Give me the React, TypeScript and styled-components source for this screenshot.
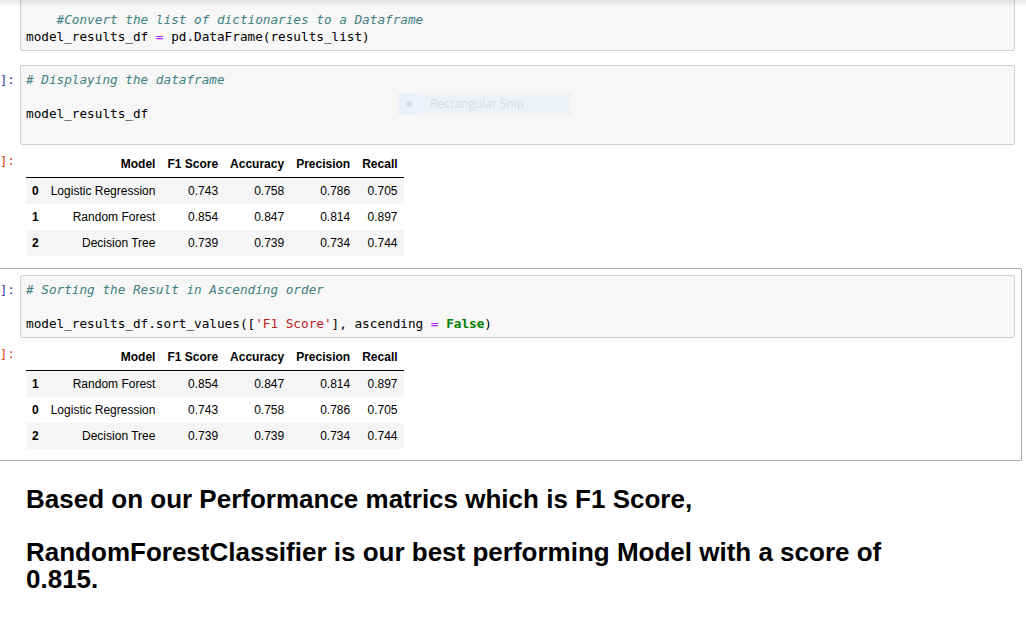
import React from "react";
import styled, { createGlobalStyle } from "styled-components";

const GlobalStyle = createGlobalStyle`
  html, body {
    margin: 0;
    padding: 0;
    background: #ffffff;
    overflow: hidden;
  }
  body {
    width: 1026px;
    height: 624px;
  }
`;

const Page = styled.div`
  position: relative;
  width: 1026px;
  height: 624px;
  overflow: hidden;
  background: #fff;
`;

const HeaderShadow = styled.div`
  position: absolute;
  top: 0;
  left: 0;
  right: 0;
  height: 7px;
  background: linear-gradient(rgba(0, 0, 0, 0.09), rgba(0, 0, 0, 0));
  pointer-events: none;
  z-index: 5;
`;

/* scrolled view: first cell starts above the window and prompts are cut off on the left */
const Notebook = styled.div`
  margin-top: -36px;
  margin-left: -31px;
  width: 1053px;
  display: flex;
  flex-direction: column;
`;

const Cell = styled.div<{ $selected?: boolean }>`
  box-sizing: border-box;
  border: 1px solid ${(p) => (p.$selected ? "#ababab" : "transparent")};
  border-radius: 2px;
  padding: 6px;
  display: flex;
  flex-direction: column;
`;

const Row = styled.div`
  display: flex;
  align-items: flex-start;
`;

const Prompt = styled.div<{ $kind: "in" | "out" }>`
  flex: 0 0 44px;
  box-sizing: border-box;
  padding-right: 5px;
  padding-top: ${(p) => (p.$kind === "in" ? "6px" : "7px")};
  text-align: right;
  font-family: "DejaVu Sans Mono", monospace;
  font-size: 12.7px;
  line-height: 17px;
  color: ${(p) => (p.$kind === "in" ? "#303f9f" : "#d84315")};
  white-space: pre;
`;

const InputBox = styled.div`
  position: relative;
  flex: 1;
  box-sizing: border-box;
  border: 1px solid #cfcfcf;
  border-radius: 2px;
  background: #f7f7f7;
  padding: 5px 5px;
`;

const CodeLine = styled.div`
  height: 17px;
  font-family: "DejaVu Sans Mono", monospace;
  font-size: 12.7px;
  line-height: 17px;
  color: #000;
  white-space: pre;
`;

const Comment = styled.span`
  color: #408080;
  font-style: italic;
`;

const Op = styled.span`
  color: #aa22ff;
`;

const Str = styled.span`
  color: #ba2121;
`;

const Kw = styled.span`
  color: #008000;
  font-weight: bold;
`;

const OutputArea = styled.div`
  flex: 1;
  padding: 6px 6px 5px 6px;
`;

const Table = styled.table`
  border-collapse: collapse;
  border-spacing: 0;
  font-family: "Liberation Sans", Arial, sans-serif;
  font-size: 12px;
  color: #000;

  th,
  td {
    padding: 0 6px;
    height: 26px;
    line-height: 14px;
    text-align: right;
    vertical-align: middle;
    white-space: nowrap;
  }
  th {
    font-weight: bold;
  }
  thead tr {
    border-bottom: 1px solid #000;
  }
  tbody tr:nth-child(odd) {
    background: #f5f5f5;
  }
  tbody th {
    text-align: left;
  }
`;

const SnipGhost = styled.div`
  position: absolute;
  left: 377px;
  top: 27px;
  width: 173px;
  height: 22px;
  display: flex;
  align-items: center;
  background: #eef2f7;
  font-family: "Open Sans", "Noto Sans", sans-serif;
  font-size: 12px;
  line-height: 20px;
  color: #d9dbdf;
`;

const SnipIcon = styled.div`
  width: 22px;
  height: 22px;
  display: flex;
  align-items: center;
  justify-content: center;
  background: #eaf1f9;
  margin-right: 10px;

  &::after {
    content: "";
    width: 6px;
    height: 6px;
    border-radius: 50%;
    background: #dcdee1;
  }
`;

const MarkdownCell = styled.div`
  padding: 25px 6px 0 57px;
  display: flex;
  flex-direction: column;
  gap: 26px;
`;

const Heading = styled.h2`
  margin: 0;
  max-width: 900px;
  font-family: "Liberation Sans", Arial, sans-serif;
  font-size: 26px;
  line-height: 27px;
  font-weight: bold;
  color: #000;
`;

type Result = { idx: number; model: string; f1: string; acc: string; prec: string; rec: string };

const results: Result[] = [
  { idx: 0, model: "Logistic Regression", f1: "0.743", acc: "0.758", prec: "0.786", rec: "0.705" },
  { idx: 1, model: "Random Forest", f1: "0.854", acc: "0.847", prec: "0.814", rec: "0.897" },
  { idx: 2, model: "Decision Tree", f1: "0.739", acc: "0.739", prec: "0.734", rec: "0.744" },
];

const sorted = [results[1], results[0], results[2]];

const ResultsTable: React.FC<{ rows: Result[] }> = ({ rows }) => (
  <Table>
    <thead>
      <tr>
        <th></th>
        <th>Model</th>
        <th>F1 Score</th>
        <th>Accuracy</th>
        <th>Precision</th>
        <th>Recall</th>
      </tr>
    </thead>
    <tbody>
      {rows.map((r) => (
        <tr key={r.idx}>
          <th>{r.idx}</th>
          <td>{r.model}</td>
          <td>{r.f1}</td>
          <td>{r.acc}</td>
          <td>{r.prec}</td>
          <td>{r.rec}</td>
        </tr>
      ))}
    </tbody>
  </Table>
);

export default function App() {
  return (
    <Page>
      <GlobalStyle />
      <HeaderShadow />
      <Notebook>
        <Cell>
          <Row>
            <Prompt $kind="in"> </Prompt>
            <InputBox>
              <CodeLine> </CodeLine>
              <CodeLine> </CodeLine>
              <CodeLine>
                {"    "}
                <Comment>#Convert the list of dictionaries to a Dataframe</Comment>
              </CodeLine>
              <CodeLine>
                model_results_df <Op>=</Op> pd.DataFrame(results_list)
              </CodeLine>
            </InputBox>
          </Row>
        </Cell>

        <Cell>
          <Row>
            <Prompt $kind="in">]:</Prompt>
            <InputBox>
              <CodeLine>
                <Comment># Displaying the dataframe</Comment>
              </CodeLine>
              <CodeLine> </CodeLine>
              <CodeLine>model_results_df</CodeLine>
              <CodeLine> </CodeLine>
              <SnipGhost>
                <SnipIcon />
                Rectangular Snip
              </SnipGhost>
            </InputBox>
          </Row>
          <Row>
            <Prompt $kind="out">]:</Prompt>
            <OutputArea>
              <ResultsTable rows={results} />
            </OutputArea>
          </Row>
        </Cell>

        <Cell $selected>
          <Row>
            <Prompt $kind="in">]:</Prompt>
            <InputBox>
              <CodeLine>
                <Comment># Sorting the Result in Ascending order</Comment>
              </CodeLine>
              <CodeLine> </CodeLine>
              <CodeLine>
                model_results_df.sort_values([<Str>'F1 Score'</Str>], ascending <Op>=</Op>{" "}
                <Kw>False</Kw>)
              </CodeLine>
            </InputBox>
          </Row>
          <Row>
            <Prompt $kind="out">]:</Prompt>
            <OutputArea>
              <ResultsTable rows={sorted} />
            </OutputArea>
          </Row>
        </Cell>

        <MarkdownCell>
          <Heading>Based on our Performance matrics which is F1 Score,</Heading>
          <Heading>
            RandomForestClassifier is our best performing Model with a score of 0.815.
          </Heading>
        </MarkdownCell>
      </Notebook>
    </Page>
  );
}
